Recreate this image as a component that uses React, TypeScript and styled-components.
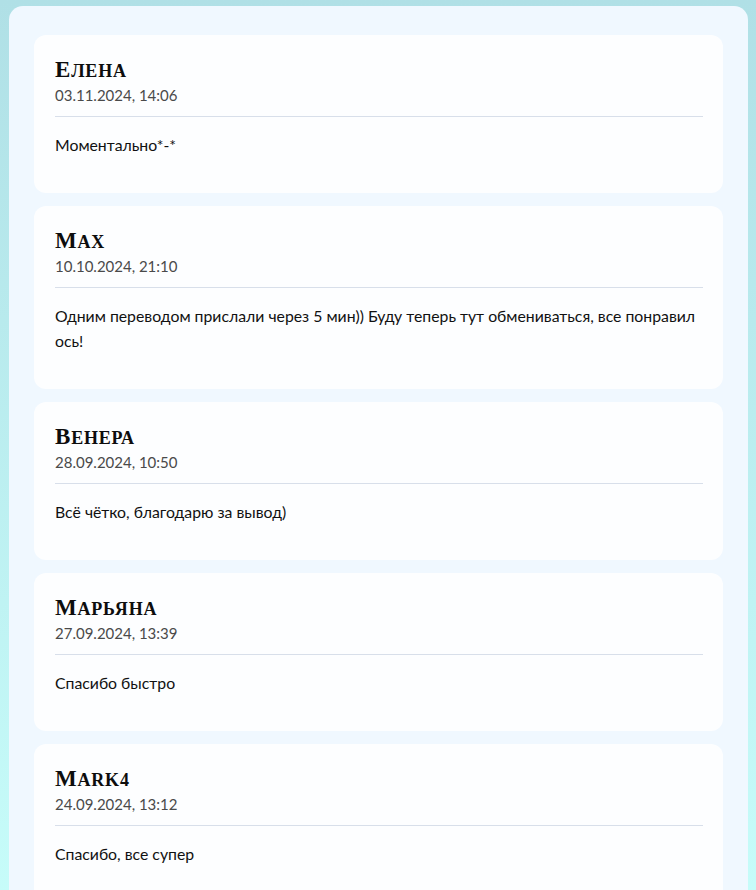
import styled, { createGlobalStyle } from 'styled-components';

const GlobalStyle = createGlobalStyle`
    html, body {
        margin: 0;
        padding: 0;
    }
    body {
        min-height: 100vh;
        background: linear-gradient(to bottom, #b0e0e6 0%, #c7fdfa 100%);
        font-family: Lato, 'Open Sans', sans-serif;
        overflow: hidden;
    }
`;

const Page = styled.div`
    padding: 6px 8px 0 9px;
`;

const Panel = styled.section`
    background: #f0f8ff;
    border-radius: 14px 14px 0 0;
    padding: 29px 25px 20px 25px;
    display: flex;
    flex-direction: column;
    gap: 13px;
`;

const Card = styled.article`
    background: #fdfeff;
    border-radius: 12px;
    padding: 23px 20px 36px 21px;
    display: flex;
    flex-direction: column;
`;

const Name = styled.h3`
    margin: 0;
    height: 26px;
    font-family: 'Liberation Serif', 'DejaVu Serif', serif;
    font-weight: 700;
    text-transform: uppercase;
    font-size: 18px;
    line-height: 26px;
    letter-spacing: 0.8px;
    color: #0d0d0d;
    &::first-letter {
        font-size: 23px;
        line-height: 20px;
    }
`;

const Date = styled.div`
    margin-top: 1px;
    height: 20px;
    font-size: 15px;
    line-height: 20px;
    color: #4a4a4a;
`;

const Divider = styled.hr`
    margin: 11px 0 0 0;
    border: 0;
    height: 1px;
    flex-shrink: 0;
    background: #d8dfea;
`;

const Text = styled.p`
    margin: 15px 0 0 0;
    font-size: 15.8px;
    line-height: 25px;
    color: #111;
    word-break: break-all;
`;

const reviews = [
    { name: 'Елена', date: '03.11.2024, 14:06', text: 'Моментально*-*' },
    {
        name: 'Max',
        date: '10.10.2024, 21:10',
        text: 'Одним переводом прислали через 5 мин)) Буду теперь тут обмениваться, все понравилось!',
    },
    { name: 'Венера', date: '28.09.2024, 10:50', text: 'Всё чётко, благодарю за вывод)' },
    { name: 'Марьяна', date: '27.09.2024, 13:39', text: 'Спасибо быстро' },
    { name: 'Mark4', date: '24.09.2024, 13:12', text: 'Спасибо, все супер' },
];

export default function App() {
    return (
        <>
            <GlobalStyle />
            <Page>
                <Panel>
                    {reviews.map((r, index) => (
                        <Card key={index}>
                            <Name>{r.name}</Name>
                            <Date>{r.date}</Date>
                            <Divider />
                            <Text>{r.text}</Text>
                        </Card>
                    ))}
                </Panel>
            </Page>
        </>
    );
}
